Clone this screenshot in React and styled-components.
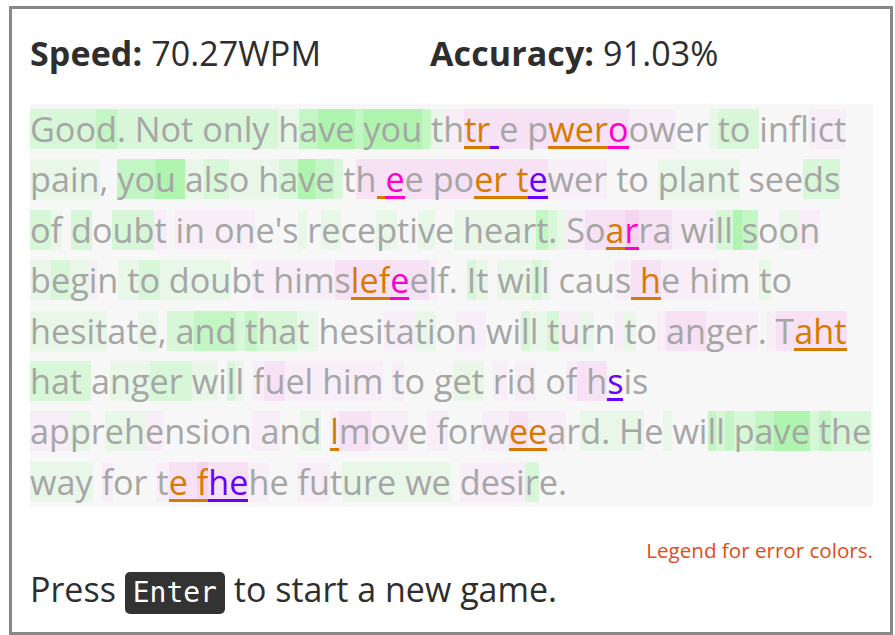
import React from 'react'
import styled, { createGlobalStyle, css } from 'styled-components'

// background shades for each typed character (green = fast, pink = slow)
const BG = {
  0: 'transparent',
  1: '#e8f7e8',
  2: '#d8f7d8',
  3: '#c4f5c4',
  4: '#aff5af',
  a: '#f7eef7',
  b: '#f7e1f5',
  c: '#f5d5f0',
}

// error kinds: o = extra, m = wrong, p = missing
const ERR = {
  o: '#d97a00',
  m: '#ff00cc',
  p: '#6a00ff',
}

const lines = [
  [['Goo', 2], ['d', 3], ['. Not only ', 2], ['h', 1], ['a', 3], ['ve', 4], [' ', 3], ['you', 4], [' ', 3], ['t', 1], ['h', 'a'], ['tr', 'b', 'o'], [' ', 'b', 'p'], ['e p', 'b'], ['wer', 'b', 'o'], ['o', 'b', 'm'], ['ow', 'a'], ['er', 0], [' ', 1], ['to ', 2], ['infl', 0], ['ict', 'a']],
  [['pain', 1], [', ', 0], ['yo', 3], ['u ', 4], ['a', 1], ['ls', 2], ['o ', 1], ['h', 1], ['a', 2], ['v', 4], ['e', 3], [' ', 2], ['t', 0], ['h', 'b'], [' ', 'b', 'o'], ['e', 'b', 'm'], ['e po', 'b'], ['er t', 'b', 'o'], ['e', 'b', 'p'], ['we', 'a'], ['r', 'a'], [' to ', 0], ['plant', 1], [' see', 0], ['ds', 2]],
  [['o', 2], ['f', 1], [' ', 0], ['d', 2], ['o', 0], ['ub', 2], ['t', 'a'], [' ', 0], ['in on', 'a'], ["e's", 0], [' ', 1], ['r', 0], ['e', 1], ['ce', 0], ['p', 1], ['ti', 0], ['v', 1], ['e', 0], [' hear', 1], ['t', 3], ['.', 2], [' ', 1], ['S', 'a'], ['o', 'b'], ['a', 'b', 'o'], ['r', 'c', 'm'], ['ra', 'b'], [' wi', 'a'], ['ll', 2], [' ', 4], ['s', 3], ['o', 0], ['o', 1], ['n', 'a']],
  [['b', 1], ['e', 2], ['g', 1], ['i', 'a'], ['n', 0], [' t', 1], ['o', 2], [' dou', 1], ['b', 0], ['t hi', 'a'], ['m', 'a'], ['s', 'b'], ['lef', 'b', 'o'], ['e', 'b', 'm'], ['e', 'b'], ['l', 'a'], ['f.', 0], [' ', 0], ['I', 2], ['t', 1], [' ', 0], ['wi', 1], ['l', 2], ['l', 1], [' cau', 0], ['s', 'a'], [' h', 'b', 'o'], ['e hi', 'a'], ['m ', 0], ['t', 1], ['o', 0]],
  [['hesit', 1], ['at', 0], ['e', 1], [',', 0], [' a', 2], ['nd', 3], [' ', 2], ['t', 3], ['ha', 2], ['t ', 1], ['hesi', 0], ['ta', 'a'], ['ti', 1], ['o', 0], ['n ', 'a'], ['wi', 0], ['l', 2], ['l ', 1], ['t', 2], ['u', 'a'], ['r', 1], ['n', 0], [' ', 'a'], ['t', 1], ['o', 0], [' ', 'a'], ['an', 'b'], ['ger', 'a'], ['.', 0], [' ', 'a'], ['T', 'b'], ['aht', 'b', 'o']],
  [['hat ', 2], ['a', 0], ['ng', 1], ['er ', 2], ['w', 1], ['i', 0], ['l', 2], ['l', 1], [' ', 0], ['f', 'a'], ['u', 'b'], ['el him', 'a'], [' ', 0], ['t', 'a'], ['o ', 0], ['g', 0], ['et', 1], [' ', 0], ['r', 'a'], ['i', 0], ['d', 'a'], [' o', 0], ['f', 'a'], [' h', 'b'], ['s', 0, 'p'], ['is', 0]],
  [['ap', 'a'], ['p', 1], ['r', 0], ['eh', 1], ['e', 'a'], ['nsion', 0], [' a', 'a'], ['n', 0], ['d', 1], [' ', 0], ['l', 'a', 'o'], ['m', 'b'], ['ov', 'a'], ['e', 0], [' f', 'a'], ['or', 0], ['w', 'a'], ['e', 'b', 'o'], ['e', 'a', 'o'], ['a', 'a'], ['r', 0], ['d. H', 1], ['e', 0], [' ', 1], ['wi', 0], ['l', 3], ['l', 2], [' ', 3], ['p', 2], ['a', 3], ['ve', 4], [' ', 2], ['t', 3], ['he', 2]],
  [['way', 1], [' ', 0], ['f', 'a'], ['or ', 0], ['t', 'a'], ['e ', 'b', 'o'], ['f', 'c', 'o'], ['he', 'b', 'p'], ['h', 'a'], ['e ', 0], ['fu', 'a'], ['t', 0], ['ure we', 1], [' ', 0], ['desi', 'a'], ['r', 2], ['e.', 0]],
]

const GlobalStyle = createGlobalStyle`
  html, body {
    margin: 0;
    padding: 0;
    overflow: hidden;
    background: #fff;
  }
  body {
    font-family: "Open Sans", "Noto Sans", sans-serif;
    color: #2e2e2e;
  }
`

const Card = styled.main`
  box-sizing: border-box;
  width: 884px;
  height: 629px;
  margin: 6px 0 0 9px;
  padding: 0 17px 0 18px;
  border: 3px solid #888;
`

const Stats = styled.div`
  display: grid;
  grid-template-columns: 400px auto;
  margin-top: 24px;
  height: 40px;
  line-height: 40px;
  font-size: 34px;
  letter-spacing: 0.1px;
`

const Stat = styled.div`
  white-space: nowrap;
  b {
    font-weight: 700;
  }
`

const Passage = styled.div`
  margin-top: 31px;
  padding: 5px 0;
  background: #f7f7f7;
`

const Line = styled.div`
  display: flex;
  height: 40px;
  line-height: 40px;
  font-size: 34.2px;
  white-space: pre;
  & + & {
    margin-top: 10.4px;
  }
`

const Char = styled.span`
  white-space: pre;
  background: ${p => BG[p.$bg]};
  color: ${p => (p.$err ? ERR[p.$err] : '#a6a6a6')};
  ${p =>
    p.$err &&
    css`
      box-shadow: inset 0 -3px 0 ${ERR[p.$err]};
    `}
`

const Legend = styled.div`
  margin-top: 28px;
  height: 30px;
  line-height: 30px;
  text-align: right;
  font-size: 20.6px;
  color: #e64a19;
`

const Prompt = styled.div`
  margin-top: 2px;
  line-height: 44px;
  font-size: 34px;
  white-space: nowrap;
`

const Key = styled.kbd`
  display: inline-block;
  padding: 0 8px;
  line-height: 42px;
  border-radius: 5px;
  background: #333;
  color: #fff;
  font-family: "DejaVu Sans Mono", monospace;
  font-size: 28px;
`

const App = () => {
  return (
    <>
      <GlobalStyle />
      <Card>
        <Stats>
          <Stat>
            <b>Speed:</b> 70.27WPM
          </Stat>
          <Stat>
            <b>Accuracy:</b> 91.03%
          </Stat>
        </Stats>
        <Passage>
          {lines.map((segs, i) => (
            <Line key={i}>
              {segs.map(([text, bg, err], j) => (
                <Char key={j} $bg={bg} $err={err}>
                  {text}
                </Char>
              ))}
            </Line>
          ))}
        </Passage>
        <Legend>Legend for error colors.</Legend>
        <Prompt>
          Press <Key>Enter</Key> to start a new game.
        </Prompt>
      </Card>
    </>
  )
}

export default App
